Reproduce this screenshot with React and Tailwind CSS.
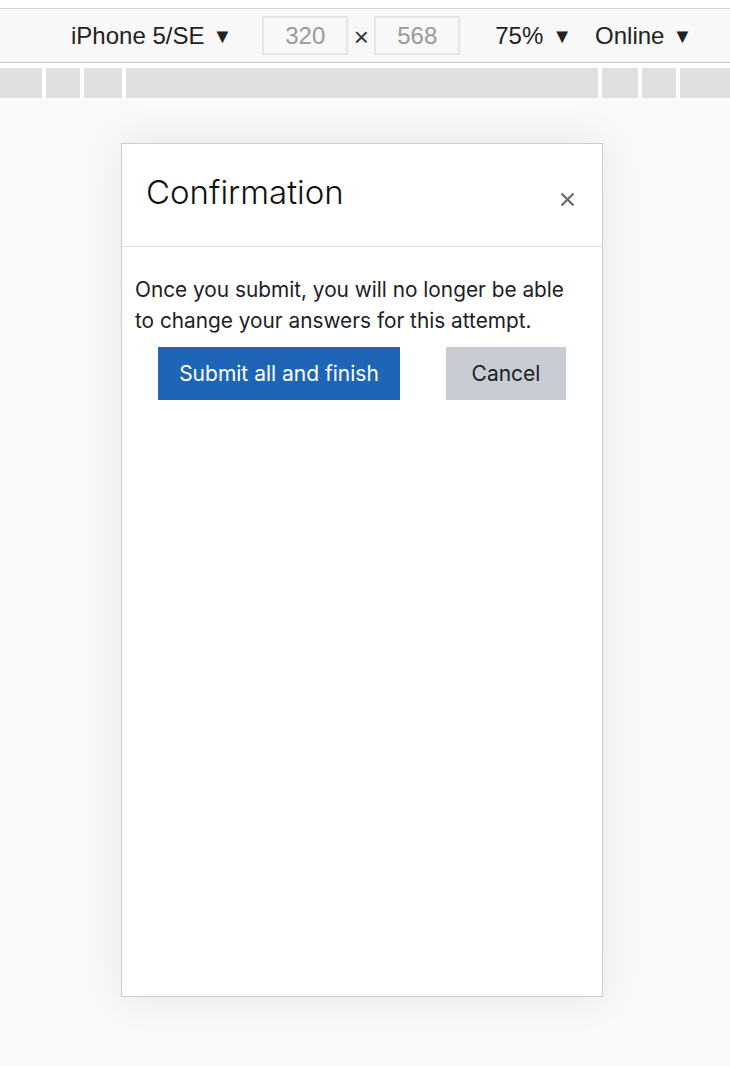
export default function App() {
  const segs = [
    { w: 42 }, { w: 34 }, { w: 38 }, { grow: true }, { w: 36 }, { w: 34 }, { w: 50 },
  ];
  return (
    <div className="w-[730px] h-[1066px] bg-[#f9f9f9] overflow-hidden flex flex-col" style={{ fontFamily: '"Liberation Sans", Arial, sans-serif' }}>
      <div className="h-[8px] bg-white" />
      <div className="h-[55px] bg-[#f8f8f8] border-t border-b border-t-[#d4d4d4] border-b-[#c8c8c8] flex items-center text-[24px] text-[#222]">
        <div className="ml-[71px] flex items-center">
          <span>iPhone 5/SE</span>
          <span className="ml-[8px] text-[20px]">▼</span>
        </div>
        <div className="ml-[30px] w-[86px] h-[39px] border-2 border-[#e6e6e6] flex items-center justify-center text-[#9a9a9a]">320</div>
        <div className="w-[26px] flex justify-center text-[26px] text-[#333] pt-[4px]">×</div>
        <div className="w-[86px] h-[39px] border-2 border-[#e6e6e6] flex items-center justify-center text-[#9a9a9a]">568</div>
        <div className="ml-[35px] flex items-center">
          <span>75%</span>
          <span className="ml-[9px] text-[20px]">▼</span>
        </div>
        <div className="ml-[23px] flex items-center">
          <span>Online</span>
          <span className="ml-[8px] text-[20px]">▼</span>
        </div>
      </div>
      <div className="h-[5px] bg-white" />
      <div className="h-[30px] flex gap-[4px] bg-white">
        {segs.map((s, i) => (
          <div key={i} className={s.grow ? "flex-1 bg-[#e0e0e0]" : "bg-[#e0e0e0]"} style={s.grow ? undefined : { width: s.w }} />
        ))}
      </div>
      <div className="flex-1 pt-[45px] pl-[121px]">
        <div className="w-[482px] h-[854px] bg-white border border-[#cccccc] shadow-[0_0_40px_rgba(0,0,0,0.08)] flex flex-col" style={{ fontFamily: 'Inter, "Noto Sans", sans-serif' }}>
          <div className="h-[103px] border-b border-[#dcdcdc] flex items-start justify-between pl-[24px] pr-[27px]">
            <div className="text-[33px] text-[#111] mt-[24px] font-light">Confirmation</div>
            <svg className="mt-[48px]" width="15" height="15" viewBox="0 0 15 15">
              <path d="M1.5 1.5 L13.5 13.5 M13.5 1.5 L1.5 13.5" stroke="#6a6a6a" strokeWidth="2.2" strokeLinecap="butt" />
            </svg>
          </div>
          <div className="pl-[13px] pt-[27px]">
            <p className="w-[445px] text-[20.8px] leading-[31px] text-[#1d2125]">
              Once you submit, you will no longer be able to change your answers for this attempt.
            </p>
            <div className="flex mt-[11px]">
              <button className="ml-[23px] w-[242px] h-[53px] bg-[#1f65b7] text-white text-[21px]">Submit all and finish</button>
              <button className="ml-[46px] w-[120px] h-[53px] bg-[#c8ccd3] text-[#1d2125] text-[21px]">Cancel</button>
            </div>
          </div>
        </div>
      </div>
    </div>
  );
}
